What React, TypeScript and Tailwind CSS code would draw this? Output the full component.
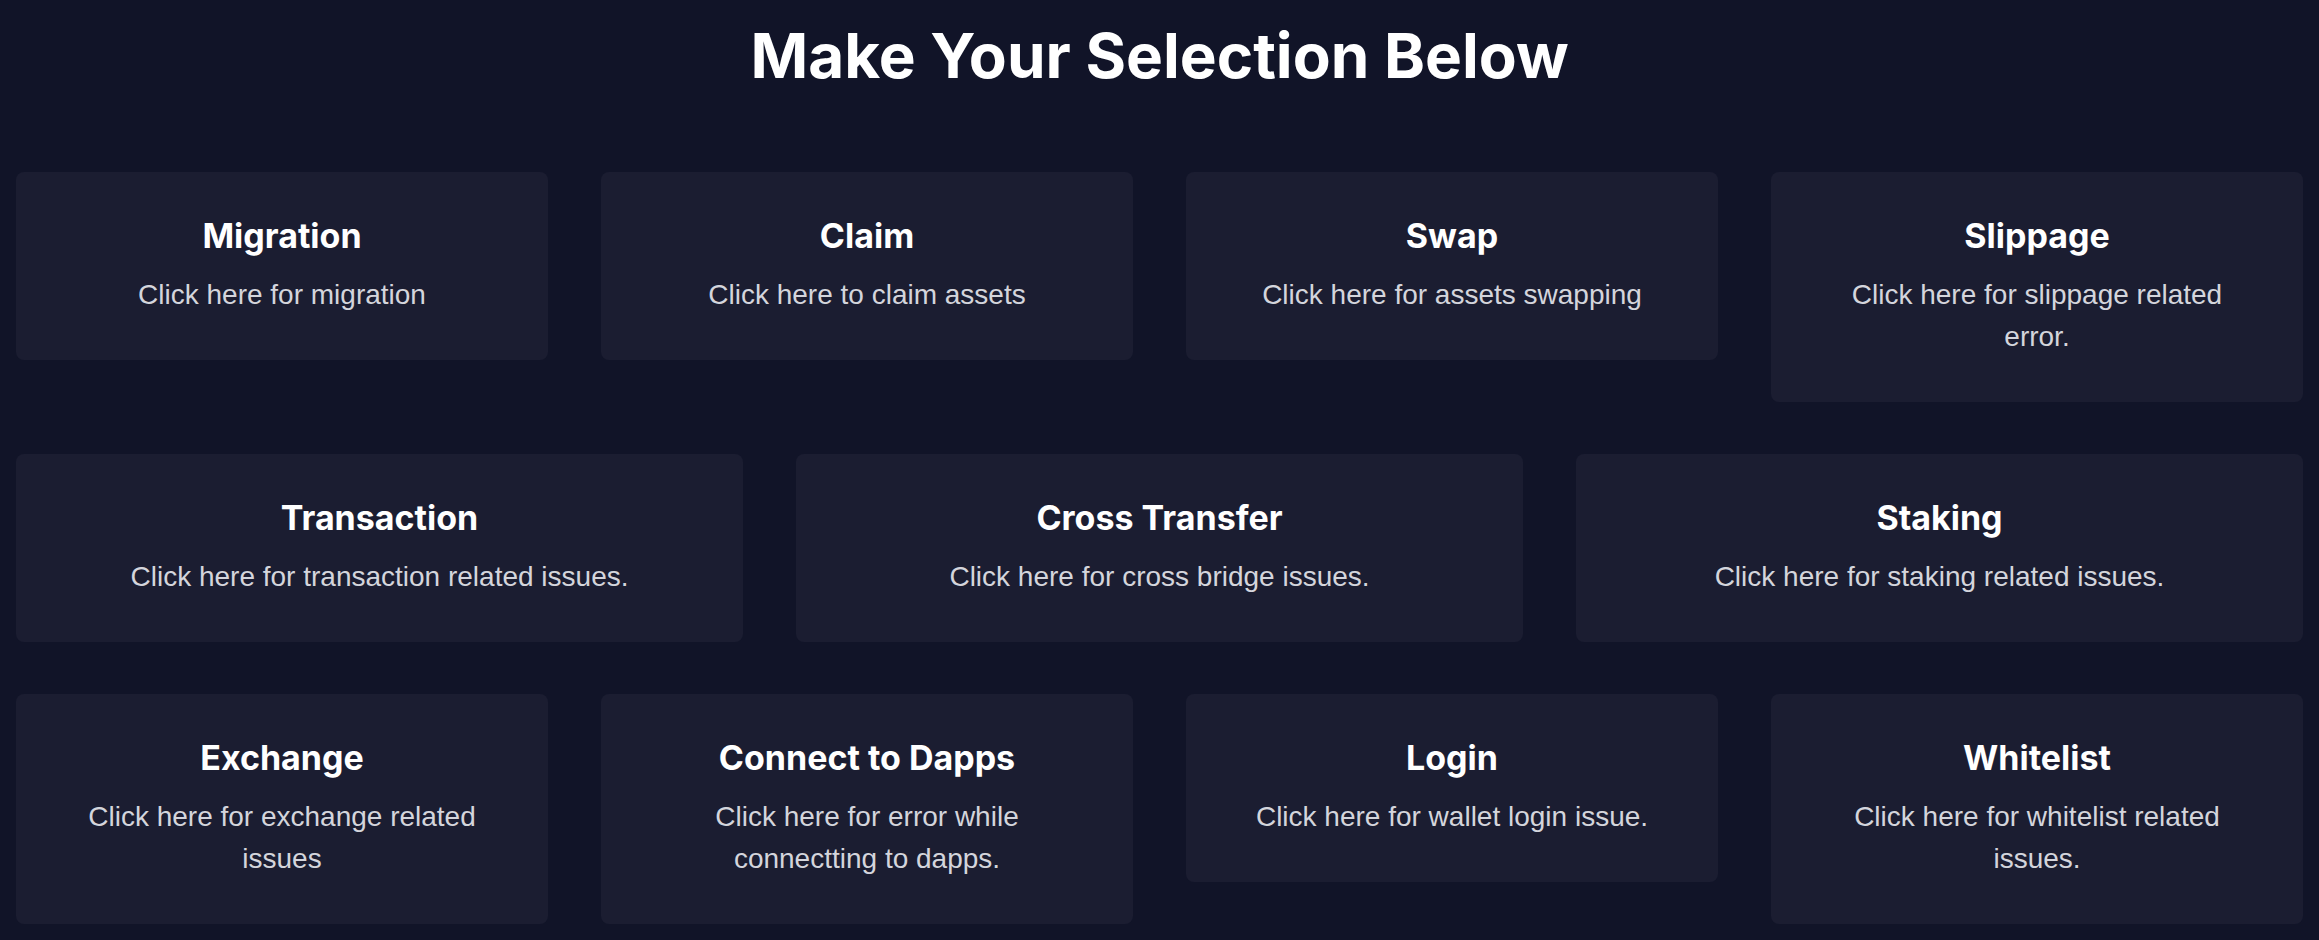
import React from "react";

type Item = { title: string; desc: string };

const row1: Item[] = [
  { title: "Migration", desc: "Click here for migration" },
  { title: "Claim", desc: "Click here to claim assets" },
  { title: "Swap", desc: "Click here for assets swapping" },
  { title: "Slippage", desc: "Click here for slippage related error." },
];

const row2: Item[] = [
  { title: "Transaction", desc: "Click here for transaction related issues." },
  { title: "Cross Transfer", desc: "Click here for cross bridge issues." },
  { title: "Staking", desc: "Click here for staking related issues." },
];

const row3: Item[] = [
  { title: "Exchange", desc: "Click here for exchange related issues" },
  { title: "Connect to Dapps", desc: "Click here for error while connectting to dapps." },
  { title: "Login", desc: "Click here for wallet login issue." },
  { title: "Whitelist", desc: "Click here for whitelist related issues." },
];

function Card({ item }: { item: Item }) {
  return (
    <div className="bg-[#1b1d31] rounded-[8px] px-[60px] pt-[38px] pb-[44px] text-center cursor-pointer">
      <h3 className="font-['Inter',sans-serif] font-bold text-[34px] leading-[52px] text-white">
        {item.title}
      </h3>
      <p className="mt-[12px] font-['Liberation_Sans',Arial,sans-serif] text-[28px] leading-[42px] text-[#d4d5dc]">
        {item.desc}
      </p>
    </div>
  );
}

export default function App() {
  return (
    <div className="min-h-screen w-full bg-[#111428] px-[16px] pb-[20px]">
      <h1 className="pt-[18px] text-center font-['Inter',sans-serif] font-bold text-[62px] leading-[75px] text-white">
        Make Your Selection Below
      </h1>
      <div className="mt-[79px] flex flex-col gap-[52px]">
        <div className="grid grid-cols-4 gap-x-[53px] items-start">
          {row1.map((it) => (
            <Card key={it.title} item={it} />
          ))}
        </div>
        <div className="grid grid-cols-3 gap-x-[53px] items-start">
          {row2.map((it) => (
            <Card key={it.title} item={it} />
          ))}
        </div>
        <div className="grid grid-cols-4 gap-x-[53px] items-start">
          {row3.map((it) => (
            <Card key={it.title} item={it} />
          ))}
        </div>
      </div>
    </div>
  );
}
